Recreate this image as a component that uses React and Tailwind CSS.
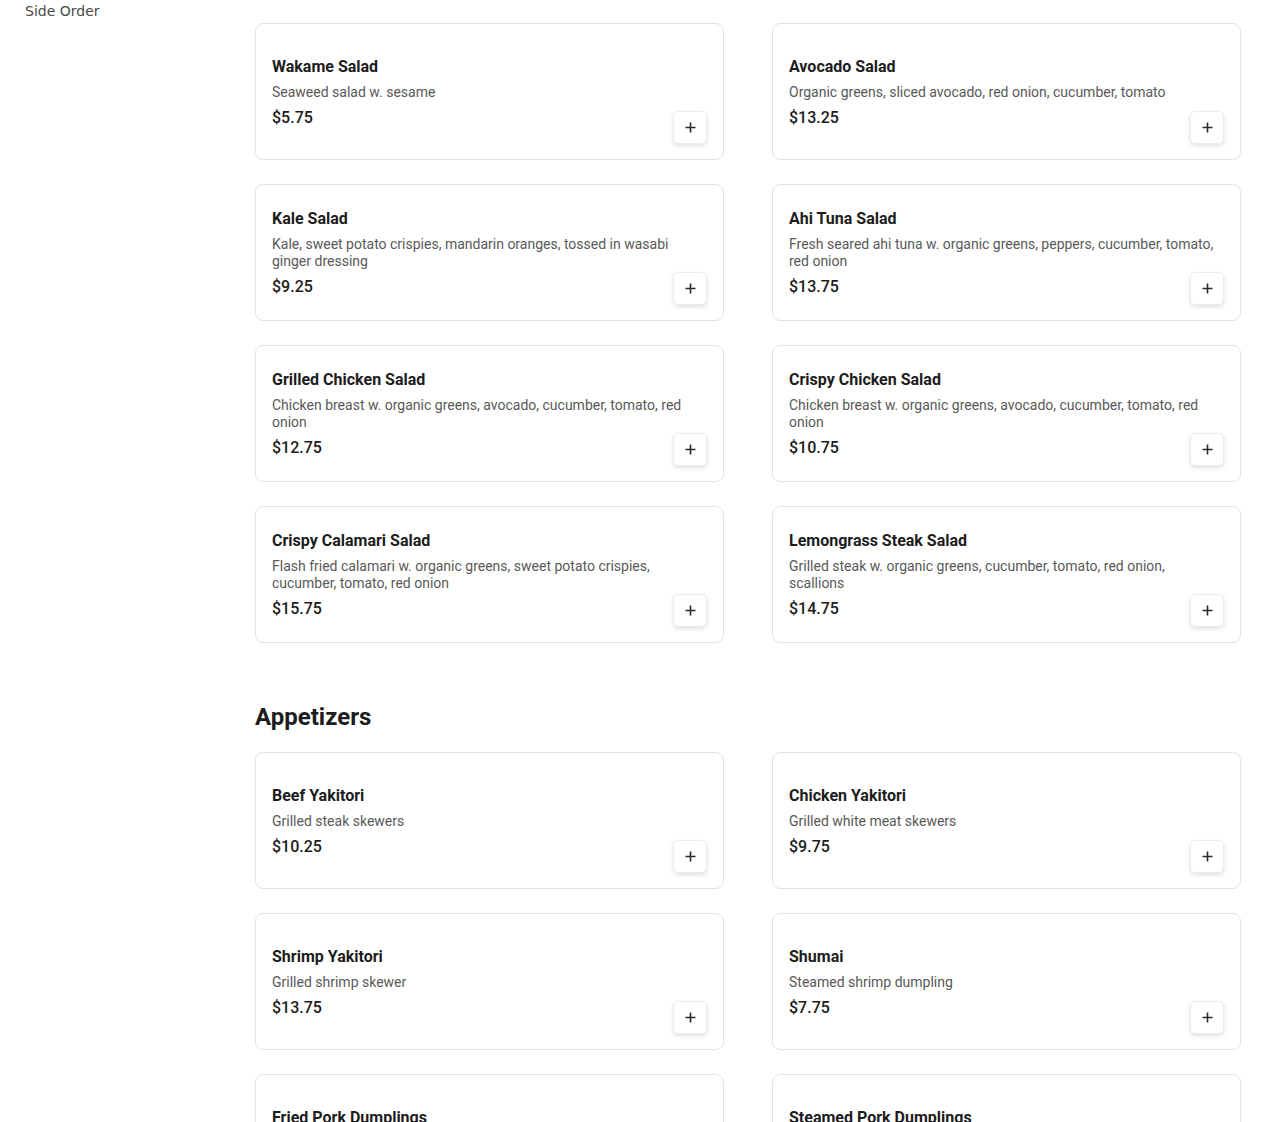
import React from 'react'

const salads = [
  { name: 'Wakame Salad', desc: 'Seaweed salad w. sesame', price: '$5.75' },
  { name: 'Avocado Salad', desc: 'Organic greens, sliced avocado, red onion, cucumber, tomato', price: '$13.25' },
  { name: 'Kale Salad', desc: 'Kale, sweet potato crispies, mandarin oranges, tossed in wasabi ginger dressing', price: '$9.25' },
  { name: 'Ahi Tuna Salad', desc: 'Fresh seared ahi tuna w. organic greens, peppers, cucumber, tomato, red onion', price: '$13.75' },
  { name: 'Grilled Chicken Salad', desc: 'Chicken breast w. organic greens, avocado, cucumber, tomato, red onion', price: '$12.75' },
  { name: 'Crispy Chicken Salad', desc: 'Chicken breast w. organic greens, avocado, cucumber, tomato, red onion', price: '$10.75' },
  { name: 'Crispy Calamari Salad', desc: 'Flash fried calamari w. organic greens, sweet potato crispies, cucumber, tomato, red onion', price: '$15.75' },
  { name: 'Lemongrass Steak Salad', desc: 'Grilled steak w. organic greens, cucumber, tomato, red onion, scallions', price: '$14.75' },
]

const appetizers = [
  { name: 'Beef Yakitori', desc: 'Grilled steak skewers', price: '$10.25' },
  { name: 'Chicken Yakitori', desc: 'Grilled white meat skewers', price: '$9.75' },
  { name: 'Shrimp Yakitori', desc: 'Grilled shrimp skewer', price: '$13.75' },
  { name: 'Shumai', desc: 'Steamed shrimp dumpling', price: '$7.75' },
  { name: 'Fried Pork Dumplings', desc: 'Pan fried pork dumplings', price: '$8.25' },
  { name: 'Steamed Pork Dumplings', desc: 'Steamed pork dumplings', price: '$8.25' },
]

const MenuCard = ({ item }) => {
  return (
    <div className="grid h-[137px] rounded-lg border border-[#e3e3e3] bg-white px-4">
      <div className="col-start-1 row-start-1 self-center mr-2 pt-px">
        <h3 className="text-base leading-6 font-bold text-[#1c1c1c]">{item.name}</h3>
        <p className="mt-[5px] text-sm leading-[17px] text-[#595959]">{item.desc}</p>
        <p className="mt-[5px] text-base leading-6 font-medium text-[#1c1c1c]">{item.price}</p>
      </div>
      <button className="col-start-1 row-start-1 self-end justify-self-end mb-[15px] flex h-[33px] w-[34px] items-center justify-center rounded-[5px] border border-[#ececec] bg-white shadow-[0_2px_4px_rgba(0,0,0,0.12)]">
        <svg width="11" height="11" viewBox="0 0 11 11" fill="none">
          <path d="M5.5 0.5v10M0.5 5.5h10" stroke="#2a2a2a" strokeWidth="1.6" />
        </svg>
      </button>
    </div>
  )
}

const App = () => {
  return (
    <div className="flex h-[1122px] overflow-hidden bg-white" style={{ fontFamily: 'Roboto, "Liberation Sans", sans-serif' }}>
      <aside className="w-[255px] shrink-0 pl-[25px] pt-px">
        <a className="block text-sm leading-5 text-[#4a4a4a]" style={{ fontFamily: '"DejaVu Sans", sans-serif' }}>
          Side Order
        </a>
      </aside>

      <main className="flex-1 pr-[29px] pt-[23px]">
        <div className="grid grid-cols-2 gap-x-12 gap-y-6">
          {salads.map((item) => (
            <MenuCard key={item.name} item={item} />
          ))}
        </div>

        <h2 className="mt-[58px] mb-[19px] text-2xl leading-8 font-bold text-[#1c1c1c]">Appetizers</h2>
        <div className="grid grid-cols-2 gap-x-12 gap-y-6">
          {appetizers.map((item) => (
            <MenuCard key={item.name} item={item} />
          ))}
        </div>
      </main>
    </div>
  )
}

export default App
